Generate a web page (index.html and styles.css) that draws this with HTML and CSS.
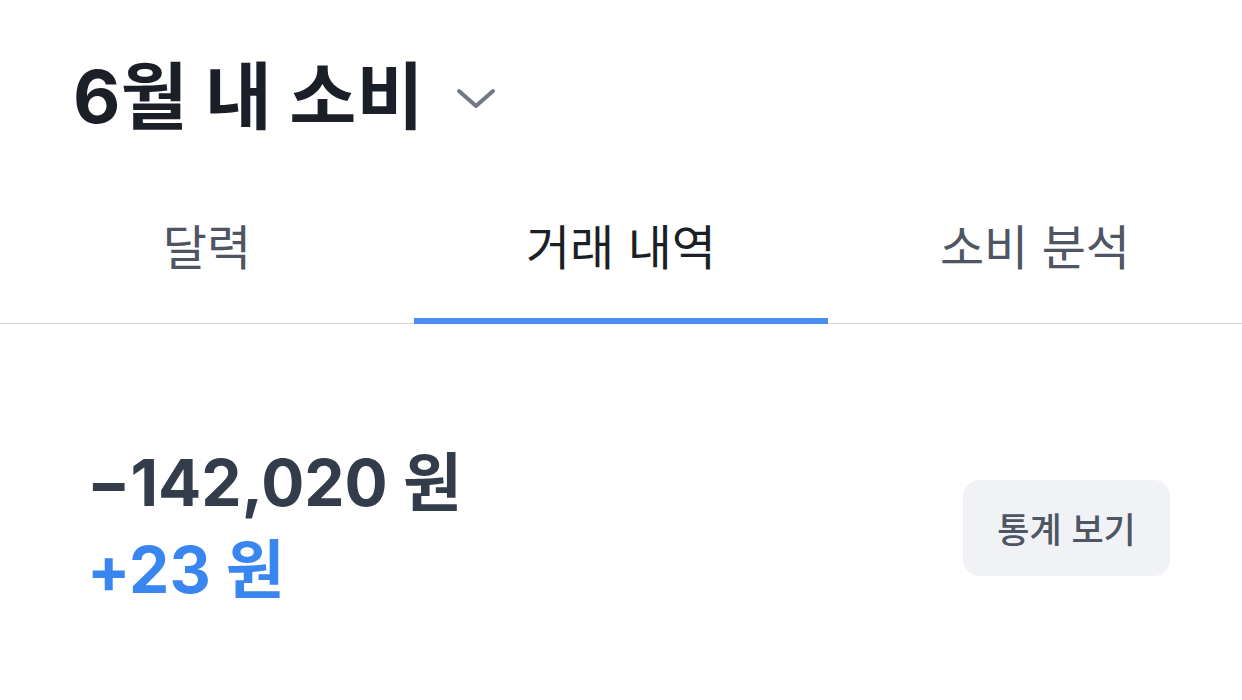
FILE: index.html
```html
<!DOCTYPE html>
<html lang="ko">
<head>
<meta charset="utf-8">
<link rel="stylesheet" href="styles.css">
</head>
<body>
<header class="header">
  <h1 class="title">6월 내 소비</h1>
  <svg class="chevron" width="40" height="24" viewBox="0 0 40 24"><path d="M3 4 L20 19 L37 4" fill="none" stroke="#737885" stroke-width="4" stroke-linecap="round" stroke-linejoin="round"/></svg>
</header>
<nav class="tabs">
  <div class="tab">달력</div>
  <div class="tab active">거래 내역</div>
  <div class="tab">소비 분석</div>
</nav>
<section class="summary">
  <div class="amounts">
    <div class="spent">−142,020 원</div>
    <div class="income">+23 원</div>
  </div>
  <button class="stats">통계 보기</button>
</section>
</body>
</html>
```
FILE: styles.css
```css
* { box-sizing: border-box; }
html, body { margin: 0; padding: 0; background: #fff; }
body {
  width: 1242px;
  height: 700px;
  overflow: hidden;
  font-family: Inter, "Noto Sans CJK KR", sans-serif;
  color: #1b1f27;
}
.header {
  display: flex;
  align-items: center;
  padding: 42px 0 0 73px;
  height: 150px;
}
.title {
  margin: 0;
  font-family: Inter, "Noto Sans CJK KR", sans-serif;
  font-size: 73px;
  font-weight: 700;
  letter-spacing: 0;
  color: #1b1f27;
  line-height: 1;
}
.chevron { margin-left: 32px; margin-top: 6px; }
.tabs {
  display: grid;
  grid-template-columns: repeat(3, 1fr);
  border-bottom: 1px solid #d3d3d6;
  margin-top: 20px;
}
.tab {
  text-align: center;
  font-family: "Noto Sans CJK KR", sans-serif;
  font-size: 48px;
  font-weight: 400;
  color: #4e5563;
  height: 154px;
  padding-top: 50px;
  line-height: 1;
  margin-bottom: -1px;
  border-bottom: 6px solid transparent;
}
.tab.active {
  color: #1b1f27;
  border-bottom-color: #4a8ff0;
}
.summary {
  display: flex;
  align-items: center;
  justify-content: space-between;
  padding: 121px 72px 0 87px;
}
.amounts { display: flex; flex-direction: column; gap: 10px; }
.spent, .income {
  font-size: 64px;
  font-weight: 700;
  line-height: 1.2;
}
.spent { color: #333c4a; }
.income { color: #3a86f0; }
.stats {
  width: 207px;
  height: 96px;
  border: none;
  border-radius: 16px;
  background: #f1f2f6;
  color: #4e5563;
  font-family: "Noto Sans CJK KR", sans-serif;
  font-size: 35px;
  font-weight: 500;
  margin-top: 2px;
}
```
